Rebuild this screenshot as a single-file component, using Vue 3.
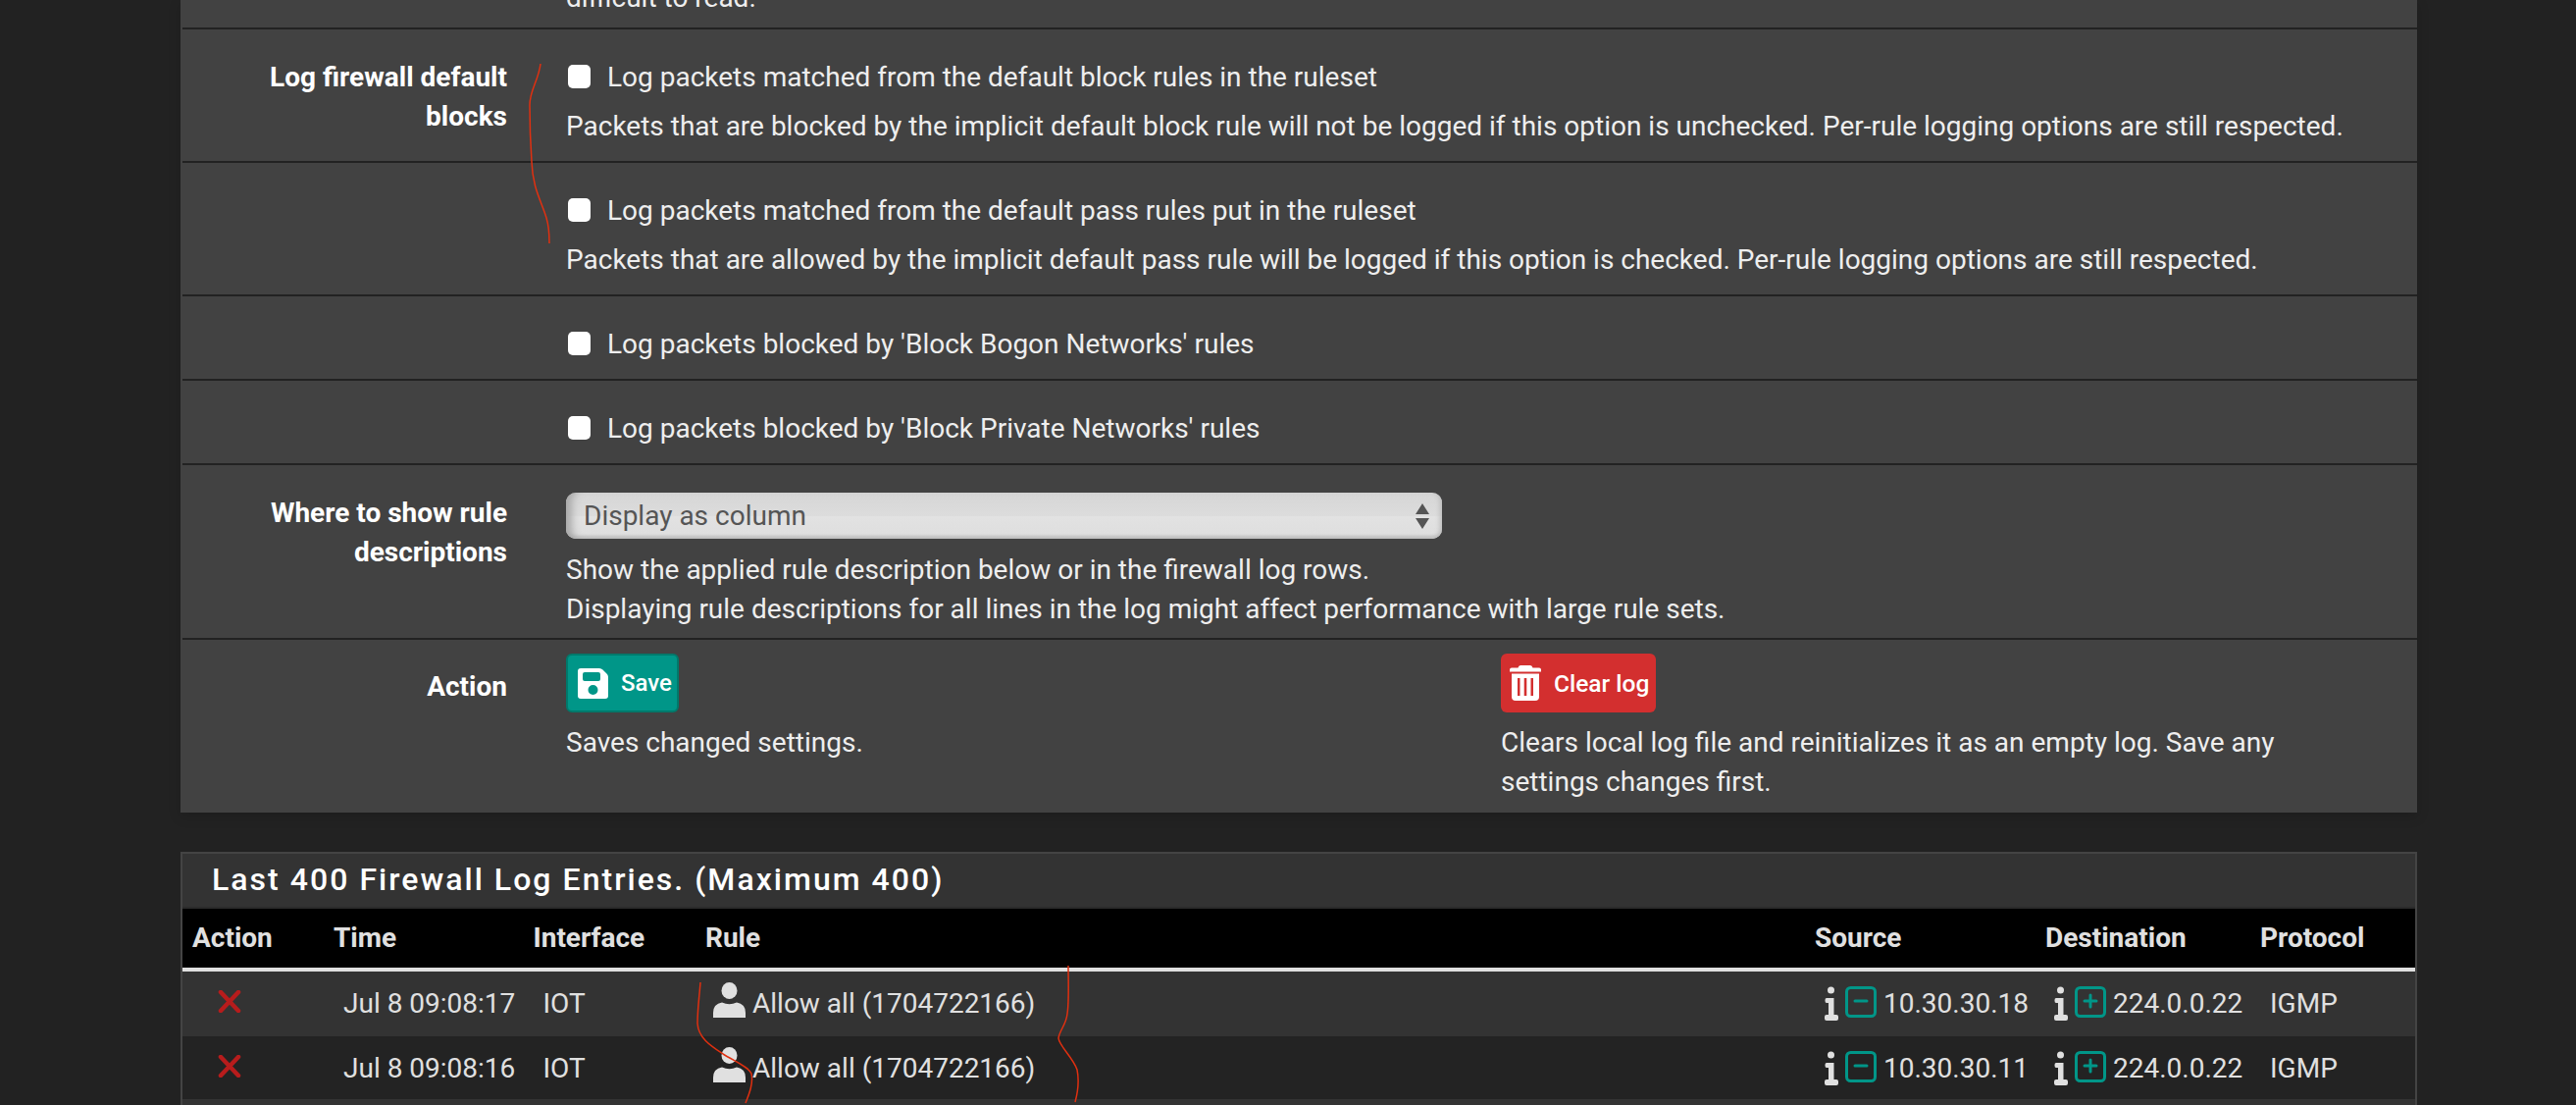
<script setup>
const entries = [
  { time: 'Jul 8 09:08:17', src: '10.30.30.18' },
  { time: 'Jul 8 09:08:16', src: '10.30.30.11' },
]
</script>

<template>
  <div class="page">
    <section class="panel">
      <div class="row row-clip">
        <div class="label"></div>
        <div class="body"><p class="line">difficult to read.</p></div>
      </div>
      <div class="row row-a">
        <div class="label">Log firewall default<br />blocks</div>
        <div class="body">
          <label class="check"><input type="checkbox" />Log packets matched from the default block rules in the ruleset</label>
          <p class="line help">Packets that are blocked by the implicit default block rule will not be logged if this option is unchecked. Per-rule logging options are still respected.</p>
        </div>
      </div>
      <div class="row row-a">
        <div class="label"></div>
        <div class="body">
          <label class="check"><input type="checkbox" />Log packets matched from the default pass rules put in the ruleset</label>
          <p class="line help">Packets that are allowed by the implicit default pass rule will be logged if this option is checked. Per-rule logging options are still respected.</p>
        </div>
      </div>
      <div class="row row-b">
        <div class="label"></div>
        <div class="body"><label class="check"><input type="checkbox" />Log packets blocked by 'Block Bogon Networks' rules</label></div>
      </div>
      <div class="row row-b">
        <div class="label"></div>
        <div class="body"><label class="check"><input type="checkbox" />Log packets blocked by 'Block Private Networks' rules</label></div>
      </div>
      <div class="row row-c">
        <div class="label label-c">Where to show rule<br />descriptions</div>
        <div class="body">
          <div class="select-wrap">
            <div class="select">Display as column</div>
            <svg class="arrows" width="20" height="28" viewBox="0 0 20 28"><path d="M10 1 L17 12 H3 Z M3 16 H17 L10 27 Z" fill="#555" /></svg>
          </div>
          <p class="line help2">Show the applied rule description below or in the firewall log rows.</p>
          <p class="line">Displaying rule descriptions for all lines in the log might affect performance with large rule sets.</p>
        </div>
      </div>
      <div class="row row-d">
        <div class="label action-label">Action</div>
        <div class="actions">
          <div class="action-col save-col">
            <button class="btn btn-save">
              <svg width="33" height="33" viewBox="0 0 33 33"><path fill-rule="evenodd" fill="#fff" d="M4 1 H23 Q25 1 26.500 2.500 L31 7 Q32 8.500 32 10 V29 Q32 32 29 32 H4 Q1 32 1 29 V4 Q1 1 4 1 Z M8 5 Q6 5 6 7 V12 Q6 14 8 14 H22 Q24 14 24 12 V7 Q24 5 22 5 Z M16.500 18 A5 5 0 1 0 16.501 28 A5 5 0 1 0 16.500 18 Z" /></svg>
              <span>Save</span>
            </button>
            <p class="line help3">Saves changed settings.</p>
          </div>
          <div class="action-col clear-col">
            <button class="btn btn-clear">
              <svg width="32" height="38" viewBox="0 0 32 38"><path fill-rule="evenodd" fill="#fff" d="M11 1 H21 Q23 1 23.500 3.500 H30 Q32 3.500 32 5.500 V7.500 H0 V5.500 Q0 3.500 2 3.500 H8.500 Q9 1 11 1 Z M2 9.500 H30 V33 Q30 37 26 37 H6 Q2 37 2 33 Z M8 14 V32 H10.500 V14 Z M14.700 14 V32 H17.300 V14 Z M21.500 14 V32 H24 V14 Z" /></svg>
              <span>Clear log</span>
            </button>
            <p class="line help3">Clears local log file and reinitializes it as an empty log. Save any settings changes first.</p>
          </div>
        </div>
      </div>
    </section>

    <section class="log">
      <h2 class="log-title">Last 400 Firewall Log Entries. (Maximum 400)</h2>
      <div class="grid head">
        <span>Action</span><span>Time</span><span>Interface</span><span>Rule</span><span>Source</span><span>Destination</span><span>Protocol</span>
      </div>
      <div v-for="(e, i) in entries" :key="e.time" class="grid entry" :class="i % 2 ? 'even' : 'odd'">
        <span class="cell-x">
          <svg width="24" height="23" viewBox="0 0 24 23"><path d="M3 2 L21 21 M21 2 L3 21" stroke="#b71c1c" stroke-width="4.500" stroke-linecap="round" fill="none" /></svg>
        </span>
        <span class="cell-time">{{ e.time }}</span>
        <span class="cell-if">IOT</span>
        <span class="cell-rule">
          <svg width="33" height="36" viewBox="0 0 33 36"><ellipse cx="16.500" cy="8.500" rx="8" ry="8.500" fill="#e0e0e0" /><path d="M0 36 V31 Q0 22 9 20.500 Q16.500 24 24 20.500 Q33 22 33 31 V36 Q33 36 32 36 H1 Z" fill="#e0e0e0" /></svg>
          Allow all (1704722166)
        </span>
        <span class="cell-ip">
          <svg class="info" width="14" height="35" viewBox="0 0 14 35"><circle cx="6.500" cy="4" r="3.500" fill="#e0e0e0" /><path d="M2 12 H9.500 V29 H12 Q14 29 14 31 V33 Q14 35 12 35 H2 Q0 35 0 33 V31 Q0 29 2 29 H4 V17 H2 Q0.500 17 0.500 15 V14 Q0.500 12 2 12 Z" fill="#e0e0e0" /></svg>
          <svg class="sq" width="32" height="32" viewBox="0 0 32 32"><rect x="1.500" y="1.500" width="29" height="29" rx="4" fill="none" stroke="#009688" stroke-width="3" /><path d="M10 15 H22" stroke="#009688" stroke-width="3" stroke-linecap="round" /></svg>
          <span class="ip">{{ e.src }}</span>
        </span>
        <span class="cell-ip dest">
          <svg class="info" width="14" height="35" viewBox="0 0 14 35"><circle cx="6.500" cy="4" r="3.500" fill="#e0e0e0" /><path d="M2 12 H9.500 V29 H12 Q14 29 14 31 V33 Q14 35 12 35 H2 Q0 35 0 33 V31 Q0 29 2 29 H4 V17 H2 Q0.500 17 0.500 15 V14 Q0.500 12 2 12 Z" fill="#e0e0e0" /></svg>
          <svg class="sq" width="32" height="32" viewBox="0 0 32 32"><rect x="1.500" y="1.500" width="29" height="29" rx="4" fill="none" stroke="#009688" stroke-width="3" /><path d="M10 15 H22 M16 9 V21" stroke="#009688" stroke-width="3" stroke-linecap="round" /></svg>
          <span class="ip">224.0.0.22</span>
        </span>
        <span class="cell-proto">IGMP</span>
      </div>
      <div class="entry-rest"></div>
    </section>

    <svg class="scribbles" width="2626" height="1126" viewBox="0 0 2626 1126">
      <path d="M551 65 C549 82 540 92 540 107 C540 130 541 150 542 165 C543 192 552 205 557 222 C560 232 560 240 560 248" />
      <path d="M714 1001 C713 1015 711 1028 711 1043 C712 1058 725 1066 737 1074 C750 1082 764 1088 766 1094 C768 1104 764 1114 760 1124" />
      <path d="M1089 984 C1089 1000 1090 1020 1088 1033 C1087 1044 1080 1050 1079 1058 C1080 1066 1094 1078 1098 1090 C1100 1100 1099 1112 1096 1123" />
    </svg>
  </div>
</template>

<style>
html, body { margin: 0; background: #222222; }
</style>

<style scoped>
.page {
  position: relative;
  width: 2626px;
  height: 1126px;
  overflow: hidden;
  background: #222222;
  font-family: Roboto, "Liberation Sans", sans-serif;
  font-size: 28px;
  line-height: 40px;
  color: #eeeeee;
}
.panel {
  margin-left: 184px;
  width: 2280px;
  background: #424242;
  box-shadow: 0 4px 12px rgba(0, 0, 0, 0.15);
}
.row {
  display: grid;
  grid-template-columns: 331px 1fr;
  column-gap: 62px;
  border-bottom: 2px solid #222222;
  margin-left: 2px;
  box-sizing: border-box;
}
.label {
  text-align: right;
  font-weight: 700;
  color: #ffffff;
}
.label-c { padding-top: 1px; }
.body { margin-left: -2px; }
.line { margin: 0; }
.row-clip { height: 30px; overflow: hidden; }
.row-clip .line { margin-top: -22px; }
.row-a { height: 136px; padding-top: 29px; }
.row-b { height: 86px; padding-top: 29px; }
.row-c { height: 178px; padding-top: 28px; }
.row-d { height: 176px; padding-top: 14px; border-bottom: 0; }
.help { margin-top: 10px; }
.help2 { margin-top: 12px; }
.help3 { margin-top: 11px; }
.check { display: flex; align-items: center; gap: 17px; margin-left: 2px; }
.check input {
  appearance: none;
  width: 23px;
  height: 24px;
  margin: -2px 0 0;
  border-radius: 5px;
  background: #ffffff;
}
.select-wrap { position: relative; width: 893px; height: 47px; }
.select {
  box-sizing: border-box;
  height: 47px;
  padding-left: 18px;
  border-radius: 10px;
  line-height: 48px;
  color: #555555;
  background: linear-gradient(#d6d6d6 0, #dcdcdc 50%, #e2e2e2 51%, #dedede 100%);
  box-shadow: inset 12px 0 8px -6px #a8a8a8, inset 0 -5px 3px -2px #c0c0c0, inset -6px 0 5px -4px #bbbbbb;
}
.arrows { position: absolute; right: 10px; top: 10px; }
.action-label { padding-top: 14px; }
.actions { display: flex; margin-left: -2px; }
.action-col { flex: none; }
.save-col { width: 953px; }
.clear-col { width: 840px; }
.btn {
  display: flex;
  align-items: center;
  border: 0;
  box-sizing: border-box;
  height: 60px;
  border-radius: 6px;
  color: #ffffff;
  font-family: inherit;
  font-size: 24.500px;
  font-weight: 500;
  padding: 0;
}
.btn-save {
  width: 115px;
  gap: 12px;
  padding-left: 9px;
  background: #009688;
  border: 2px solid #00796b;
  font-size: 24px;
}
.btn-clear {
  width: 158px;
  gap: 13px;
  padding-left: 9px;
  background: #d32f2f;
}
.log {
  box-sizing: border-box;
  margin: 40px 0 0 184px;
  width: 2280px;
  height: 300px;
  border: 2px solid #444444;
  background: #333333;
}
.log-title {
  margin: 0;
  height: 54px;
  padding-left: 30px;
  font-size: 32px;
  font-weight: 500;
  line-height: 52px;
  letter-spacing: 2.030px;
  color: #ffffff;
  border-bottom: 2px solid #2b2b2b;
}
.grid {
  display: grid;
  grid-template-columns: 144px 203.500px 175.500px 1131px 235px 219px 1fr;
  padding-left: 10px;
  align-items: center;
}
.head {
  height: 60px;
  background: #000000;
  color: #e0e0e0;
  font-weight: 700;
  border-bottom: 4px solid #e0e0e0;
}
.entry { color: #e0e0e0; }
.odd { height: 66px; background: #333333; }
.even { height: 62px; padding-top: 2px; background: #232323; }
.cell-x { padding-left: 26px; display: flex; margin-top: -6px; }
.cell-time, .cell-if, .cell-proto { padding-left: 10px; }
.cell-rule { display: flex; align-items: center; gap: 7px; padding-left: 8px; }
.cell-rule svg { margin-top: -8px; }
.cell-ip { display: flex; align-items: center; padding-left: 10px; }
.dest { padding-left: 9px; }
.info { margin-top: -2px; }
.sq { margin: -4px 0 0 7px; }
.ip { margin-left: 7px; }
.entry-rest { height: 6px; background: #333333; }
.scribbles { position: absolute; left: 0; top: 0; pointer-events: none; }
.scribbles path { fill: none; stroke: #e03010; stroke-width: 1.500; }
</style>
